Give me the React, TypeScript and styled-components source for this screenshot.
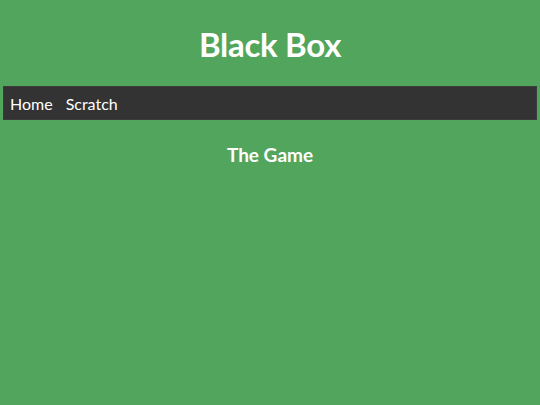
import React from 'react'
import styled, { createGlobalStyle } from 'styled-components'

const GlobalStyle = createGlobalStyle`
  html, body {
    margin: 0;
    padding: 0;
    background: #52a55c;
  }
  body {
    font-family: Lato, 'Open Sans', sans-serif;
    color: #fff;
  }
`

const Page = styled.div`
  padding: 0 3px;
  min-height: 405px;
`

const Title = styled.h1`
  margin: 0;
  padding-top: 23px;
  height: 86px;
  box-sizing: border-box;
  text-align: center;
  font-size: 33px;
  font-weight: 700;
  line-height: 42px;
  letter-spacing: -0.3px;
`

const Nav = styled.nav`
  display: flex;
  align-items: center;
  gap: 13px;
  height: 34px;
  box-sizing: border-box;
  padding: 0 6px;
  background: #333333;
  border: 1px solid #3b3b3b;
`

const NavLink = styled.a`
  color: #fff;
  text-decoration: none;
  font-size: 16px;
  font-weight: 400;
`

const Section = styled.h2`
  margin: 22px 0 0;
  text-align: center;
  font-size: 19px;
  font-weight: 700;
  line-height: 26px;
`

export default function App() {
  return (
    <>
      <GlobalStyle />
      <Page>
        <Title>Black Box</Title>
        <Nav>
          <NavLink href="#">Home</NavLink>
          <NavLink href="#">Scratch</NavLink>
        </Nav>
        <Section>The Game</Section>
      </Page>
    </>
  )
}
